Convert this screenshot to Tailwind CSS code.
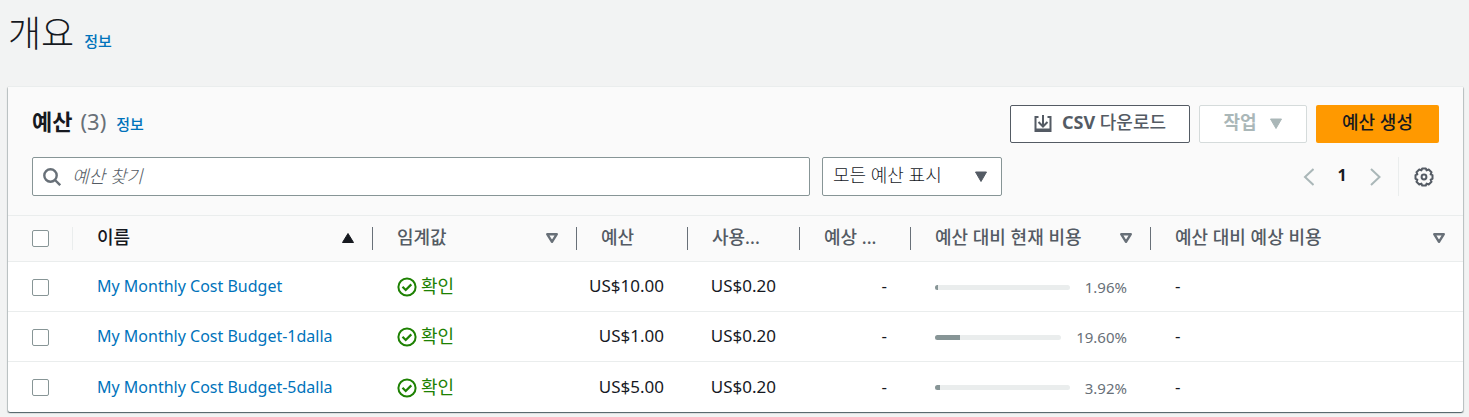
<!DOCTYPE html>
<html lang="ko">
<head>
  <meta charset="UTF-8" />
  <meta name="viewport" content="width=device-width, initial-scale=1" />
  <title>예산 | 개요</title>
  <script src="https://cdn.jsdelivr.net/npm/@tailwindcss/browser@4"></script>
</head>
<body class="min-h-screen bg-[#f2f3f3] px-2 font-['Noto_Sans','Noto_Sans_CJK_KR',sans-serif] text-base text-[#16191f]">
  <header class="flex items-baseline gap-2.5 pt-[9px] pb-[27px]">
    <h1 class="text-[36px] leading-[50px] font-light">개요</h1>
    <a href="#" class="text-[15px] font-medium text-[#0073bb]">정보</a>
  </header>

  <main class="mr-[-2px] rounded-xs border-t border-[#eaeded] bg-white shadow-[0_1px_1px_0_rgba(0,28,36,0.5),1px_1px_1px_0_rgba(0,28,36,0.2),-1px_1px_1px_0_rgba(0,28,36,0.2)]">
    <div class="border-b border-[#eaeded] bg-[#fafafa] px-6 pt-[18px] pb-[19px]">
      <div class="flex items-start justify-between">
        <div class="flex items-baseline gap-2.5">
          <h2 class="flex gap-2 text-[22px] leading-8 font-bold">예산 <span class="font-normal text-[#687078]">(3)</span></h2>
          <a href="#" class="text-[15px] font-medium text-[#0073bb]">정보</a>
        </div>
        <div class="flex items-center gap-[9px] text-lg font-bold">
          <button type="button" class="flex h-[38px] w-[180px] items-center justify-center gap-2.5 rounded-xs border border-[#545b64] bg-white text-[#545b64]">
            <svg class="size-[18px]" viewBox="0 0 18 18" fill="none" stroke="currentColor" stroke-width="2" aria-hidden="true">
              <path d="M4.500 2H1.500v14h15V2h-3M9 0v11M4.500 7L9 11.500 13.500 7" />
              <path d="M1.500 15h15" stroke-width="3" />
            </svg>
            <span class="pb-1 text-lg">CSV <span class="font-medium">다운로드</span></span>
          </button>
          <button type="button" disabled class="flex h-[38px] w-[108px] items-center justify-center gap-3 rounded-xs border border-[#d5dbdb] bg-white text-[#aab7b8]">
            <span class="pb-1">작업</span>
            <svg class="h-3 w-3.5" viewBox="0 0 14 12" fill="currentColor" aria-hidden="true"><path d="M1.500 1h11L7 10.500z" stroke="currentColor" stroke-linejoin="round" /></svg>
          </button>
          <button type="button" class="h-[38px] w-[123px] rounded-xs bg-[#ff9900] pb-1 font-medium text-[#16191f]">예산 생성</button>
        </div>
      </div>

      <div class="mt-3.5 flex h-[39px] items-center">
        <label class="flex h-full flex-1 items-center rounded-xs border border-[#879596] bg-white pl-2.5">
          <svg class="size-[18px]" viewBox="0 0 18 18" fill="none" stroke="#687078" stroke-width="2.400" aria-hidden="true">
            <circle cx="7.500" cy="7.500" r="6.200" />
            <path d="M12 12l5.200 5.200" />
          </svg>
          <input type="search" aria-label="예산 찾기" placeholder="예산 찾기" class="ml-[11px] h-full flex-1 pb-0.5 text-lg outline-none placeholder:font-light placeholder:text-[#545b64] placeholder:italic" />
        </label>
        <div class="relative ml-3 h-full">
          <select aria-label="예산 필터" class="h-full w-[180px] appearance-none rounded-xs border border-[#879596] bg-white px-2.5 pb-1 text-lg leading-6 font-light">
            <option>모든 예산 표시</option>
          </select>
          <svg class="pointer-events-none absolute top-3.5 right-3.5 h-3 w-3.5" viewBox="0 0 14 12" fill="#545b64" aria-hidden="true"><path d="M1.500 1h11L7 10.500z" stroke="#545b64" stroke-linejoin="round" /></svg>
        </div>
        <nav class="ml-[300px] flex h-full items-center" aria-label="페이지">
          <button type="button" disabled aria-label="이전 페이지" class="w-3">
            <svg class="h-[18px] w-3" viewBox="0 0 12 18" fill="none" stroke="#aab7b8" stroke-width="2"><path d="M11.500 1L3 9l8.500 8" /></svg>
          </button>
          <span class="w-14 pb-1 text-center font-bold">1</span>
          <button type="button" disabled aria-label="다음 페이지" class="w-3">
            <svg class="h-[18px] w-3" viewBox="0 0 12 18" fill="none" stroke="#aab7b8" stroke-width="2"><path d="M1 1l8.500 8L1 17" /></svg>
          </button>
        </nav>
        <button type="button" aria-label="기본 설정" class="ml-4 flex h-full items-center border-l border-[#eaeded] pr-[5px] pl-[15px]">
          <svg class="size-5" viewBox="0 0 20 20" fill="none" stroke="#545b64" stroke-width="2" stroke-linejoin="round">
            <path d="M8.200 1.500h3.600l.8 1.900 2.100-.9 2.800 2.800-.9 2.100 1.900.8v3.600l-1.900.8.9 2.100-2.800 2.800-2.100-.9-.8 1.900H8.200l-.8-1.900-2.100.9-2.800-2.800.9-2.100-1.900-.8V8.200l1.900-.8-.9-2.100 2.800-2.800 2.100.9z" />
            <circle cx="10" cy="10" r="2.400" />
          </svg>
        </button>
      </div>
    </div>

    <table class="w-full table-fixed text-left">
      <colgroup>
        <col class="w-[65px]" />
        <col class="w-[300px]" />
        <col class="w-[204px]" />
        <col class="w-[111px]" />
        <col class="w-[112px]" />
        <col class="w-[111px]" />
        <col class="w-[240px]" />
        <col />
      </colgroup>
      <thead class="bg-[#fafafa] text-lg text-[#545b64]">
        <tr class="h-[45px] border-b border-[#eaeded]">
          <th class="p-0">
            <div class="flex h-[23px] items-center border-r border-[#eaeded] pl-6">
              <input type="checkbox" aria-label="모두 선택" class="size-[17px] appearance-none rounded-xs border border-[#879596] bg-white" />
            </div>
          </th>
          <th class="p-0 font-medium text-[#16191f]" aria-sort="ascending">
            <div class="flex h-[23px] items-center justify-between border-r border-[#687078] pr-[17px] pl-6">
              <span class="pb-0.5">이름</span>
              <svg class="h-3 w-3.5" viewBox="0 0 14 12" fill="currentColor" aria-hidden="true"><path d="M1.500 10.500h11L7 1.500z" stroke="currentColor" stroke-linejoin="round" /></svg>
            </div>
          </th>
          <th class="p-0 font-medium">
            <div class="flex h-[23px] items-center justify-between border-r border-[#687078] pr-[17px] pl-6">
              <span class="pb-0.5">임계값</span>
              <svg class="h-3 w-3.5" viewBox="0 0 14 12" fill="none" stroke="#687078" stroke-width="2.400" stroke-linejoin="round" aria-hidden="true"><path d="M2.200 2.200h9.600L7 9.800z" /></svg>
            </div>
          </th>
          <th class="p-0 font-medium">
            <div class="flex h-[23px] items-center border-r border-[#687078] px-6"><span class="pb-0.5">예산</span></div>
          </th>
          <th class="p-0 font-medium">
            <div class="flex h-[23px] items-center border-r border-[#687078] px-6 whitespace-nowrap"><span class="pb-0.5">사용...</span></div>
          </th>
          <th class="p-0 font-medium">
            <div class="flex h-[23px] items-center border-r border-[#687078] px-6 whitespace-nowrap"><span class="pb-0.5">예상 ...</span></div>
          </th>
          <th class="p-0 font-medium">
            <div class="flex h-[23px] items-center justify-between border-r border-[#687078] pr-[17px] pl-6">
              <span class="pb-0.5">예산 대비 현재 비용</span>
              <svg class="h-3 w-3.5" viewBox="0 0 14 12" fill="none" stroke="#687078" stroke-width="2.400" stroke-linejoin="round" aria-hidden="true"><path d="M2.200 2.200h9.600L7 9.800z" /></svg>
            </div>
          </th>
          <th class="p-0 font-medium">
            <div class="flex h-[23px] items-center justify-between pr-[17px] pl-6">
              <span class="pb-0.5">예산 대비 예상 비용</span>
              <svg class="h-3 w-3.5" viewBox="0 0 14 12" fill="none" stroke="#687078" stroke-width="2.400" stroke-linejoin="round" aria-hidden="true"><path d="M2.200 2.200h9.600L7 9.800z" /></svg>
            </div>
          </th>
        </tr>
      </thead>
      <tbody>
        <tr class="h-[50px] border-b border-[#eaeded]">
          <td class="pt-0.5 pl-6"><input type="checkbox" aria-label="My Monthly Cost Budget" class="block size-[17px] appearance-none rounded-xs border border-[#879596] bg-white" /></td>
          <td class="pl-6"><a href="#" class="text-[#0073bb]">My Monthly Cost Budget</a></td>
          <td class="pt-0.5 pl-6">
            <div class="flex items-center gap-1 text-lg text-[#1d8102]">
              <svg class="size-5" viewBox="0 0 20 20" fill="none" stroke="currentColor" stroke-width="2" aria-hidden="true"><circle cx="10" cy="10" r="8.600" /><path d="M5.500 9.800l3.200 3.200 5.600-5.600" stroke-width="2.200" /></svg>
              <span class="pb-0.5">확인</span>
            </div>
          </td>
          <td class="pr-6 text-right text-[17px]">US$10.00</td>
          <td class="pr-6 text-right text-[17px]">US$0.20</td>
          <td class="pr-6 text-right text-[17px]">-</td>
          <td class="px-6 pt-0.5">
            <div class="flex items-center gap-[15px] text-[#687078]">
              <div class="h-[5px] flex-1 overflow-hidden rounded-full bg-[#eaeded]"><div class="h-full bg-[#879596]" style="width: 1.96%"></div></div>
              <span class="text-[15px]">1.96%</span>
            </div>
          </td>
          <td class="pl-6 text-[17px]">-</td>
        </tr>
        <tr class="h-[50px] border-b border-[#eaeded]">
          <td class="pt-0.5 pl-6"><input type="checkbox" aria-label="My Monthly Cost Budget-1dalla" class="block size-[17px] appearance-none rounded-xs border border-[#879596] bg-white" /></td>
          <td class="pl-6"><a href="#" class="text-[#0073bb]">My Monthly Cost Budget-1dalla</a></td>
          <td class="pt-0.5 pl-6">
            <div class="flex items-center gap-1 text-lg text-[#1d8102]">
              <svg class="size-5" viewBox="0 0 20 20" fill="none" stroke="currentColor" stroke-width="2" aria-hidden="true"><circle cx="10" cy="10" r="8.600" /><path d="M5.500 9.800l3.200 3.200 5.600-5.600" stroke-width="2.200" /></svg>
              <span class="pb-0.5">확인</span>
            </div>
          </td>
          <td class="pr-6 text-right text-[17px]">US$1.00</td>
          <td class="pr-6 text-right text-[17px]">US$0.20</td>
          <td class="pr-6 text-right text-[17px]">-</td>
          <td class="px-6 pt-0.5">
            <div class="flex items-center gap-[15px] text-[#687078]">
              <div class="h-[5px] flex-1 overflow-hidden rounded-full bg-[#eaeded]"><div class="h-full bg-[#879596]" style="width: 19.6%"></div></div>
              <span class="text-[15px]">19.60%</span>
            </div>
          </td>
          <td class="pl-6 text-[17px]">-</td>
        </tr>
        <tr class="h-[51px]">
          <td class="pt-0.5 pl-6"><input type="checkbox" aria-label="My Monthly Cost Budget-5dalla" class="block size-[17px] appearance-none rounded-xs border border-[#879596] bg-white" /></td>
          <td class="pl-6"><a href="#" class="text-[#0073bb]">My Monthly Cost Budget-5dalla</a></td>
          <td class="pt-0.5 pl-6">
            <div class="flex items-center gap-1 text-lg text-[#1d8102]">
              <svg class="size-5" viewBox="0 0 20 20" fill="none" stroke="currentColor" stroke-width="2" aria-hidden="true"><circle cx="10" cy="10" r="8.600" /><path d="M5.500 9.800l3.200 3.200 5.600-5.600" stroke-width="2.200" /></svg>
              <span class="pb-0.5">확인</span>
            </div>
          </td>
          <td class="pr-6 text-right text-[17px]">US$5.00</td>
          <td class="pr-6 text-right text-[17px]">US$0.20</td>
          <td class="pr-6 text-right text-[17px]">-</td>
          <td class="px-6 pt-0.5">
            <div class="flex items-center gap-[15px] text-[#687078]">
              <div class="h-[5px] flex-1 overflow-hidden rounded-full bg-[#eaeded]"><div class="h-full bg-[#879596]" style="width: 3.92%"></div></div>
              <span class="text-[15px]">3.92%</span>
            </div>
          </td>
          <td class="pl-6 text-[17px]">-</td>
        </tr>
      </tbody>
    </table>
  </main>
</body>
</html>
